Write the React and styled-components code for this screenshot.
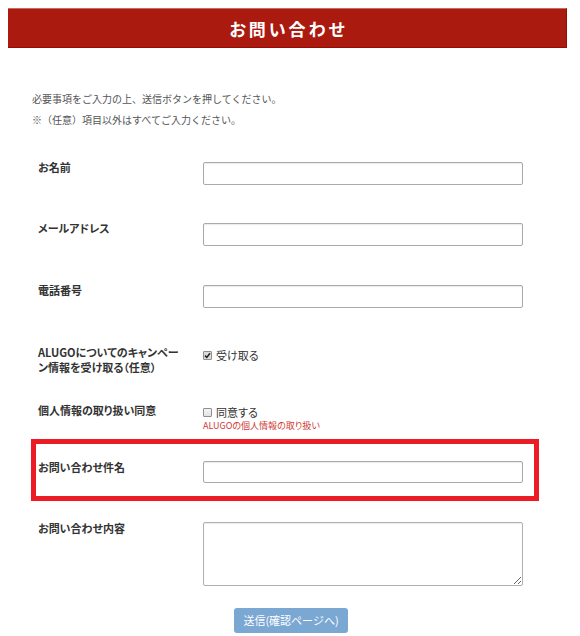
import React from "react";
import { createGlobalStyle, styled } from "styled-components";

const GlobalStyle = createGlobalStyle`
  body {
    margin: 8px;
    font-family: "Noto Sans CJK JP", "Noto Sans", sans-serif;
    font-feature-settings: "palt";
    color: #333;
    background: #fff;
  }
`;

// ラベルと入力欄の1行分
const fields = [
  { label: "お名前", pb: 36 },
  { label: "メールアドレス", pb: 37 },
  { label: "電話番号", pb: 37 },
];

const App = () => {
  return (
    <Page>
      <GlobalStyle />
      <Header>お問い合わせ</Header>

      <Intro>
        <p>必要事項をご入力の上、送信ボタンを押してください。</p>
        <p>※（任意）項目以外はすべてご入力ください。</p>
      </Intro>

      <Form onSubmit={(e) => e.preventDefault()}>
        {fields.map((f) => (
          <Row key={f.label} $pb={f.pb}>
            <Label>{f.label}</Label>
            <TextInput type="text" />
          </Row>
        ))}

        <Row $pb={28}>
          <Label $nowrap>
            ALUGOについてのキャンペー
            <br />
            ン情報を受け取る（任意）
          </Label>
          <div>
            <CheckLine $top={2}>
              <CheckBox $checked>
                <svg width="7" height="7" viewBox="0 0 7 7">
                  <path d="M1 3.6 L2.8 5.4 L6 1.2" fill="none" stroke="#222" strokeWidth="1.5" />
                </svg>
              </CheckBox>
              受け取る
            </CheckLine>
          </div>
        </Row>

        <Row $pb={7}>
          <Label>個人情報の取り扱い同意</Label>
          <div>
            <CheckLine $top={1}>
              <CheckBox />
              同意する
            </CheckLine>
            <PolicyLink href="#">ALUGOの個人情報の取り扱い</PolicyLink>
          </div>
        </Row>

        <Highlight>
          <Row $pb={0}>
            <Label>お問い合わせ件名</Label>
            <TextInput type="text" $top={1} $h={22} />
          </Row>
        </Highlight>

        <Row $pb={20}>
          <Label>お問い合わせ内容</Label>
          <TextArea />
        </Row>

        <ButtonRow>
          <SubmitButton type="submit">送信(確認ページへ)</SubmitButton>
        </ButtonRow>
      </Form>
    </Page>
  );
};

export default App;

const Page = styled.div`
  width: 559px;
`;

const Header = styled.h1`
  box-sizing: border-box;
  height: 40px;
  margin: 0;
  display: flex;
  align-items: center;
  justify-content: center;
  background-color: #ab1a0f;
  border-top: 1px solid #c96a62;
  border-right: 1px solid #980c06;
  border-bottom: 1px solid #980c06;
  color: #fff;
  font-size: 17px;
  font-weight: bold;
  letter-spacing: 3px;
  padding-left: 3px;
`;

const Intro = styled.div`
  margin: 40px 0 0 24px;
  font-size: 10px;
  line-height: 21px;
  color: #555;
  font-feature-settings: normal;

  p {
    margin: 0;
  }
`;

const Form = styled.form`
  margin-top: 30px;
  padding-left: 30px;
`;

const Row = styled.div`
  display: grid;
  grid-template-columns: 165px 320px;
  align-items: start;
  padding-bottom: ${(p) => p.$pb}px;
`;

const Label = styled.p`
  margin: 0;
  font-size: 11px;
  font-weight: bold;
  line-height: 15px;
  color: #333;
  white-space: ${(p) => (p.$nowrap ? "nowrap" : "normal")};
`;

const TextInput = styled.input`
  box-sizing: border-box;
  width: 320px;
  height: ${(p) => p.$h || 23}px;
  margin: ${(p) => (p.$top === undefined ? 2 : p.$top)}px 0 0;
  padding: 2px 5px;
  border: 1px solid #a9a9a9;
  border-radius: 2px;
  box-shadow: inset 0 1px 1px rgba(0, 0, 0, 0.08);
  font-size: 12px;
  outline: none;
`;

const TextArea = styled.textarea`
  box-sizing: border-box;
  width: 320px;
  height: 64px;
  margin: 1px 0 0;
  padding: 2px 5px;
  border: 1px solid #b0b0b0;
  border-radius: 2px;
  box-shadow: inset 0 1px 1px rgba(0, 0, 0, 0.08);
  font-size: 12px;
  outline: none;
`;

const CheckLine = styled.label`
  display: flex;
  align-items: center;
  gap: 4px;
  margin-top: ${(p) => p.$top}px;
  font-size: 11px;
  line-height: 16px;
  color: #333;
`;

const CheckBox = styled.span`
  box-sizing: border-box;
  width: 9px;
  height: 9px;
  display: inline-flex;
  align-items: center;
  justify-content: center;
  border: 1px solid #8e8e8e;
  border-radius: 1px;
  background: ${(p) => (p.$checked ? "#dcdcdc" : "linear-gradient(#f4f4f4, #e2e2e2)")};
`;

const PolicyLink = styled.a`
  display: block;
  font-size: 9px;
  line-height: 12px;
  color: #cf3a35;
  text-decoration: none;
`;

const Highlight = styled.div`
  width: 508px;
  box-sizing: border-box;
  margin-left: -7px;
  margin-bottom: 20px;
  padding: 16px 0 13px 2px;
  border: 5px solid #ec1c24;
`;

const ButtonRow = styled.div`
  padding-left: 196px;
`;

const SubmitButton = styled.button`
  width: 114px;
  height: 25px;
  padding: 0;
  border: none;
  border-radius: 3px;
  background-color: #7ba7d3;
  color: #fff;
  font-family: inherit;
  font-size: 11px;
  cursor: pointer;
`;
